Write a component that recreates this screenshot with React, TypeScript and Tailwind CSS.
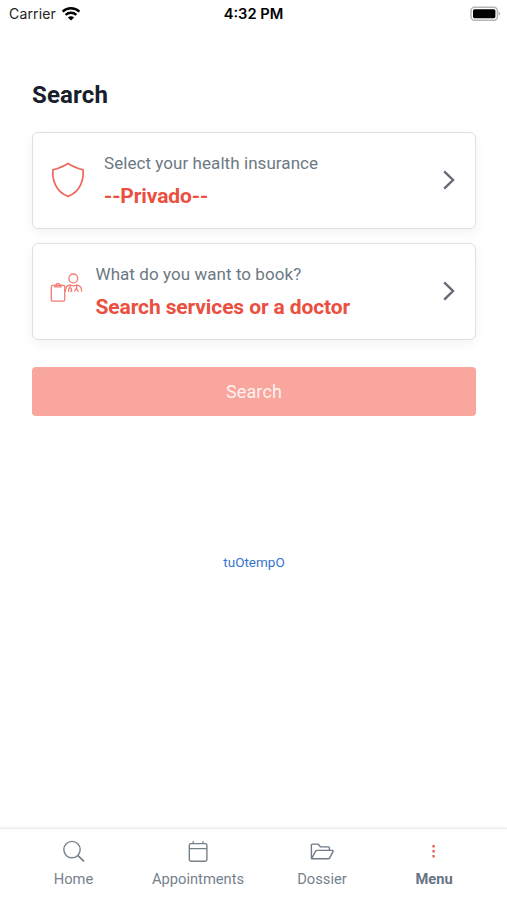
import React from 'react';

interface FieldCardProps {
  icon: React.ReactNode;
  label: string;
  value: string;
}

interface NavItem {
  label: string;
  icon: React.ReactNode;
  active?: boolean;
}

const WifiIcon = () => (
  <svg width="20" height="16" viewBox="0 0 20 16" fill="none" stroke="#000" strokeWidth="2.3">
    <path d="M1.6 5.7C6.4 1.1 13.6 1.1 18.4 5.7" />
    <path d="M4.6 8.9C7.7 6 12.3 6 15.4 8.9" />
    <path d="M10 14.6L6.9 11.5C8.7 9.8 11.3 9.8 13.1 11.5Z" fill="#000" stroke="none" />
  </svg>
);

const BatteryIcon = () => (
  <svg width="31" height="16" viewBox="0 0 31 16">
    <rect x="1" y="1.2" width="26.4" height="13" rx="3.6" fill="#fff" stroke="#b5b5b5" strokeWidth="1.5" />
    <rect x="3" y="3.2" width="22.4" height="9" rx="1.6" fill="#000" />
    <path d="M28.6 5.6C30.8 6.4 30.8 9 28.6 9.8Z" fill="#b5b5b5" />
  </svg>
);

const ShieldIcon = () => (
  <svg width="34" height="36" viewBox="0 0 34 36" fill="none" stroke="#f0695f" strokeWidth="1.8" strokeLinejoin="round">
    <path d="M17 1.4C12.6 4.4 7.6 6.2 1.9 7.8C1 19 5.4 30 17 34.4C28.6 30 33 19 32.1 7.8C26.4 6.2 21.4 4.4 17 1.4Z" />
  </svg>
);

const DoctorIcon = () => (
  <svg width="33" height="30" viewBox="0 0 33 30" fill="none" stroke="#f47c73" strokeWidth="1.3" strokeLinecap="round" strokeLinejoin="round">
    <rect x="1.3" y="12.3" width="13.4" height="15.8" rx="1.4" />
    <path d="M4.8 13.8V12.2H6.3C6.4 9.8 9.6 9.8 9.7 12.2H11.2V13.8Z" />
    <circle cx="23.3" cy="5.4" r="4.4" />
    <path d="M15.4 18.2C15.4 14 17 12.2 20 12.1L23.3 12.8L26.6 12.1C30.4 12.2 31.6 14 31.6 18.2" />
    <path d="M20 12.1V14.8M18.6 18.2V16.4C18.6 14.4 21.6 14.4 21.6 16.4V18.2H20.6M26.6 12.1V15M24.6 18.2L26.2 15.2L28.2 18.2" />
  </svg>
);

const ChevronIcon = () => (
  <svg width="12" height="20" viewBox="0 0 12 20" fill="none" stroke="#686878" strokeWidth="2.4">
    <path d="M1.2 1.4L10 10L1.2 18.6" />
  </svg>
);

const SearchIcon = () => (
  <svg width="24" height="24" viewBox="0 0 24 24" fill="none" stroke="#76818a" strokeWidth="1.4">
    <circle cx="10" cy="9.6" r="8.2" />
    <path d="M15.7 15.3L22 21.4" strokeWidth="1.8" />
  </svg>
);

const CalendarIcon = () => (
  <svg width="24" height="24" viewBox="0 0 24 24" fill="none" stroke="#76818a" strokeWidth="1.4">
    <rect x="3.3" y="3.6" width="17.6" height="17.6" rx="1.6" />
    <path d="M3.3 8.6H20.9M7.2 1.2V4M17 1.2V4" />
  </svg>
);

const FolderIcon = () => (
  <svg width="24" height="24" viewBox="0 0 24 24" fill="none" stroke="#6f7b8a" strokeWidth="1.4" strokeLinejoin="round">
    <path d="M1.4 18.6V5.2C1.4 4.5 1.8 4.1 2.5 4.1H8L10.6 6.9H18.2C19 6.9 19.4 7.4 19.4 8.1V10.4" />
    <path d="M1.6 18.7L5.5 11.4C5.9 10.7 6.3 10.4 7.1 10.4H22.4C23.2 10.4 23.4 10.9 23 11.6L19.9 17.6C19.5 18.4 19 18.8 18.2 18.8H2.2C1.8 18.8 1.6 18.8 1.6 18.7Z" />
  </svg>
);

const DotsIcon = () => (
  <svg width="24" height="24" viewBox="0 0 24 24" fill="#e95f50">
    <rect x="10.4" y="5" width="2.4" height="2.4" rx="0.4" />
    <rect x="10.4" y="10" width="2.4" height="2.4" rx="0.4" />
    <rect x="10.4" y="15" width="2.4" height="2.4" rx="0.4" />
  </svg>
);

const NAV_ITEMS: NavItem[] = [
  { label: 'Home', icon: <SearchIcon /> },
  { label: 'Appointments', icon: <CalendarIcon /> },
  { label: 'Dossier', icon: <FolderIcon /> },
  { label: 'Menu', icon: <DotsIcon />, active: true },
];

const FieldCard: React.FC<FieldCardProps> = ({ icon, label, value }) => (
  <button className="flex h-[97px] w-full items-center rounded-md border border-[#dfe0e2] bg-white pr-5 pb-[2px] pl-[18px] text-left shadow-[0_4px_12px_rgba(0,0,0,0.05)]">
    {icon}
    <span className="flex flex-1 flex-col pt-[2px]">
      <span className="text-[17px] leading-7 tracking-[0.06px] text-[#6c7883]">{label}</span>
      <span className="pt-[3px] text-[21px] leading-8 font-bold tracking-[-0.11px] text-[#ea4f40]">{value}</span>
    </span>
    <ChevronIcon />
  </button>
);

export default function App() {
  return (
    <div className="flex h-[900px] w-full flex-col bg-white font-[Roboto,sans-serif]">
      <header className="grid h-7 grid-cols-3 items-center pr-[6px] pl-[9px] font-[Inter,sans-serif] text-[14px] text-[#222]">
        <div className="flex items-center gap-[5px] pb-[1px]">
          <span className="tracking-[0.15px]">Carrier</span>
          <WifiIcon />
        </div>
        <span className="pr-[3px] text-center text-[14.7px] font-semibold text-black">4:32 PM</span>
        <div className="flex justify-end">
          <BatteryIcon />
        </div>
      </header>

      <main className="flex flex-1 flex-col pt-[49px] pr-[31px] pl-8">
        <h1 className="text-2xl leading-9 font-bold tracking-[0.15px] text-[#17202b]">Search</h1>

        <div className="flex flex-col gap-[14px] pt-[19px]">
          <FieldCard
            icon={<span className="mr-[19px]"><ShieldIcon /></span>}
            label="Select your health insurance"
            value="--Privado--"
          />
          <FieldCard
            icon={<span className="mr-[12.5px] -ml-[1px] mb-[6px]"><DoctorIcon /></span>}
            label="What do you want to book?"
            value="Search services or a doctor"
          />
        </div>

        <button className="mt-[27px] h-[49px] rounded-sm bg-[#f9a69e] text-[18px] tracking-[0.15px] text-[#fff1ef]">Search</button>

        <a className="pt-[136px] text-center text-[13.5px] leading-5 text-[#3474ca]">tuOtempO</a>
      </main>

      <nav className="grid h-[72px] grid-cols-[125px_124px_124px_100px] border-t border-[#ececec] pt-[11px] pl-[11px] shadow-[0_-1px_3px_rgba(0,0,0,0.05)]">
        {NAV_ITEMS.map((item) => (
          <div key={item.label} className="flex flex-col items-center gap-[5px] text-[14.7px] leading-5 text-[#76818d]">
            {item.icon}
            <span className={item.active ? 'font-bold text-[#667483]' : ''}>{item.label}</span>
          </div>
        ))}
      </nav>
    </div>
  );
}
